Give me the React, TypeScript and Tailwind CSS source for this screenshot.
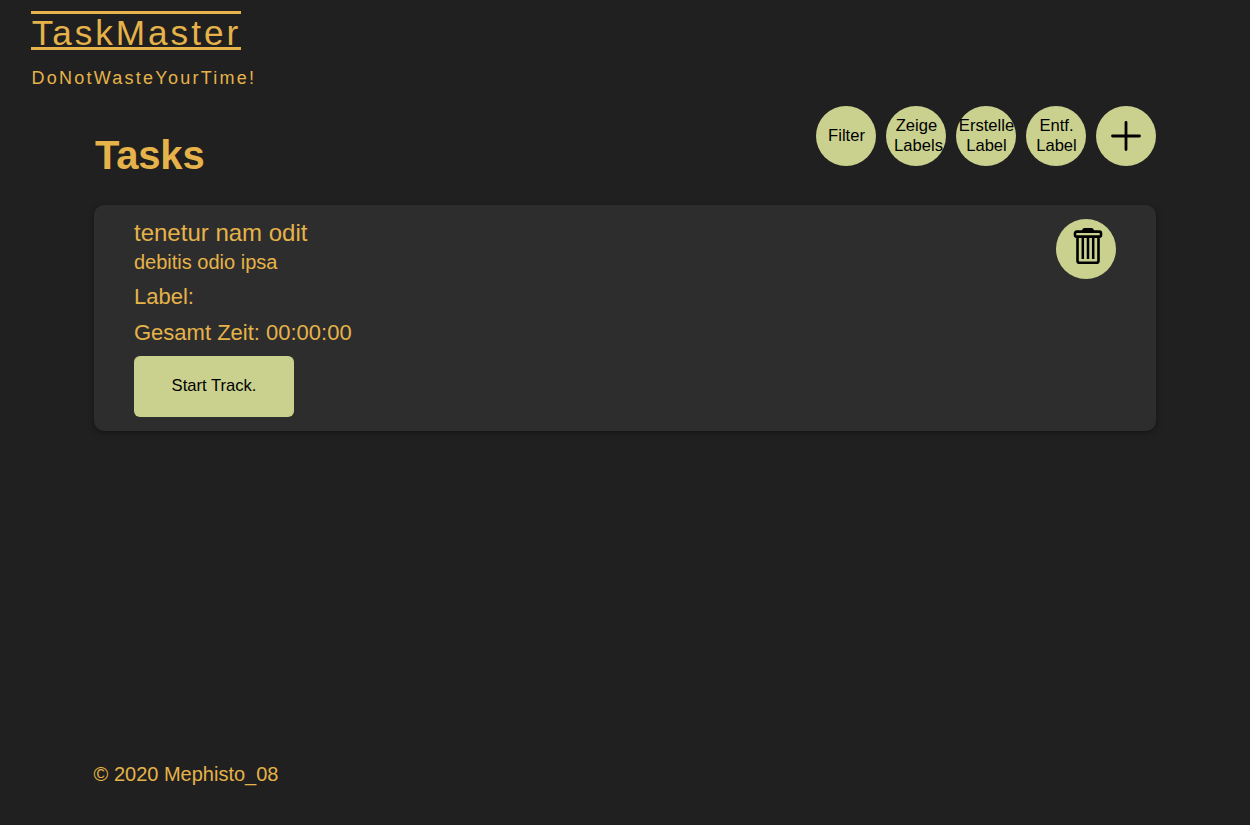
import type { ReactNode } from "react";

function RoundButton({ children, label }: { children: ReactNode; label?: string }) {
  return (
    <button
      aria-label={label}
      className="flex h-[60px] w-[60px] shrink-0 flex-col items-center justify-center rounded-full bg-[#cad18f] text-[16.6px] leading-5 whitespace-nowrap text-black"
    >
      {children}
    </button>
  );
}

function PlusIcon() {
  return (
    <svg width="30" height="30" viewBox="0 0 30 30" fill="none" stroke="#000" strokeWidth="2.8" strokeLinecap="round">
      <path d="M15 1.5v27M1.5 15h27" />
    </svg>
  );
}

function TrashIcon() {
  return (
    <svg className="-mt-[6px] ml-1" width="30" height="38" viewBox="0 0 30 38" fill="none" stroke="#000">
      <path d="M8.7 4.5Q9.2 1 11.5 1h7Q20.8 1 21.3 4.5z" fill="#000" stroke="none" />
      <rect x="2" y="4.6" width="26" height="5" rx="1.6" strokeWidth="2.6" />
      <path d="M4.5 9.5V33.7q0 2.1 2.1 2.1H23.4q2.1 0 2.1-2.1V9.5" strokeWidth="2.6" />
      <path d="M9.8 11V32M15 11V32M20.2 11V32" strokeWidth="2.5" />
    </svg>
  );
}

export default function App() {
  return (
    <div className="flex h-screen flex-col overflow-hidden bg-[#202020] font-['Liberation_Sans',Arial,sans-serif] text-[#e5b349]">
      <header className="flex flex-col items-start pt-[11px] pl-[31px]">
        <h1 className="h-[39px] w-[210px] border-y-[3px] border-[#e5b349] pl-[0.7px] text-[35.2px] leading-[38px] tracking-[2.95px] whitespace-nowrap">
          TaskMaster
        </h1>
        <p className="mt-[18px] pl-[0.5px] text-[18px] leading-[21px] tracking-[2.25px]">DoNotWasteYourTime!</p>
      </header>

      <main className="mx-[94px] mt-[17px]">
        <div className="flex h-[99px] items-start justify-between">
          <h2 className="mt-[26px] pl-px text-[40px] leading-[46px] font-bold tracking-[-0.2px]">Tasks</h2>
          <div className="flex gap-[10px]">
            <RoundButton>
              <span className="pl-px">Filter</span>
            </RoundButton>
            <RoundButton>
              <span className="pl-px">Zeige</span>
              <span className="pl-[5px]">Labels</span>
            </RoundButton>
            <RoundButton>
              <span className="pl-px">Erstelle</span>
              <span className="pl-px">Label</span>
            </RoundButton>
            <RoundButton>
              <span className="pl-px">Entf.</span>
              <span className="pl-px">Label</span>
            </RoundButton>
            <RoundButton label="Neuer Task">
              <PlusIcon />
            </RoundButton>
          </div>
        </div>

        <section className="flex h-[226px] items-start justify-between rounded-[10px] bg-[#2d2d2d] px-10 pt-[14px] shadow-[0_2px_6px_rgba(0,0,0,0.35)]">
          <div>
            <h3 className="text-2xl leading-7">tenetur nam odit</h3>
            <p className="mt-[3px] text-xl leading-6">debitis odio ipsa</p>
            <p className="mt-[10px] text-[22px] leading-[26px]">Label:</p>
            <p className="mt-[10px] text-[22px] leading-[26px]">Gesamt Zeit: 00:00:00</p>
            <button className="mt-[10px] flex h-[61px] w-40 items-center justify-center rounded-md bg-[#cad18f] text-[16.6px] text-black">
              Start Track.
            </button>
          </div>
          <RoundButton label="Task löschen">
            <TrashIcon />
          </RoundButton>
        </section>
      </main>

      <footer className="mt-auto mb-[39px] ml-[93.6px] text-xl leading-6">© 2020 Mephisto_08</footer>
    </div>
  );
}
